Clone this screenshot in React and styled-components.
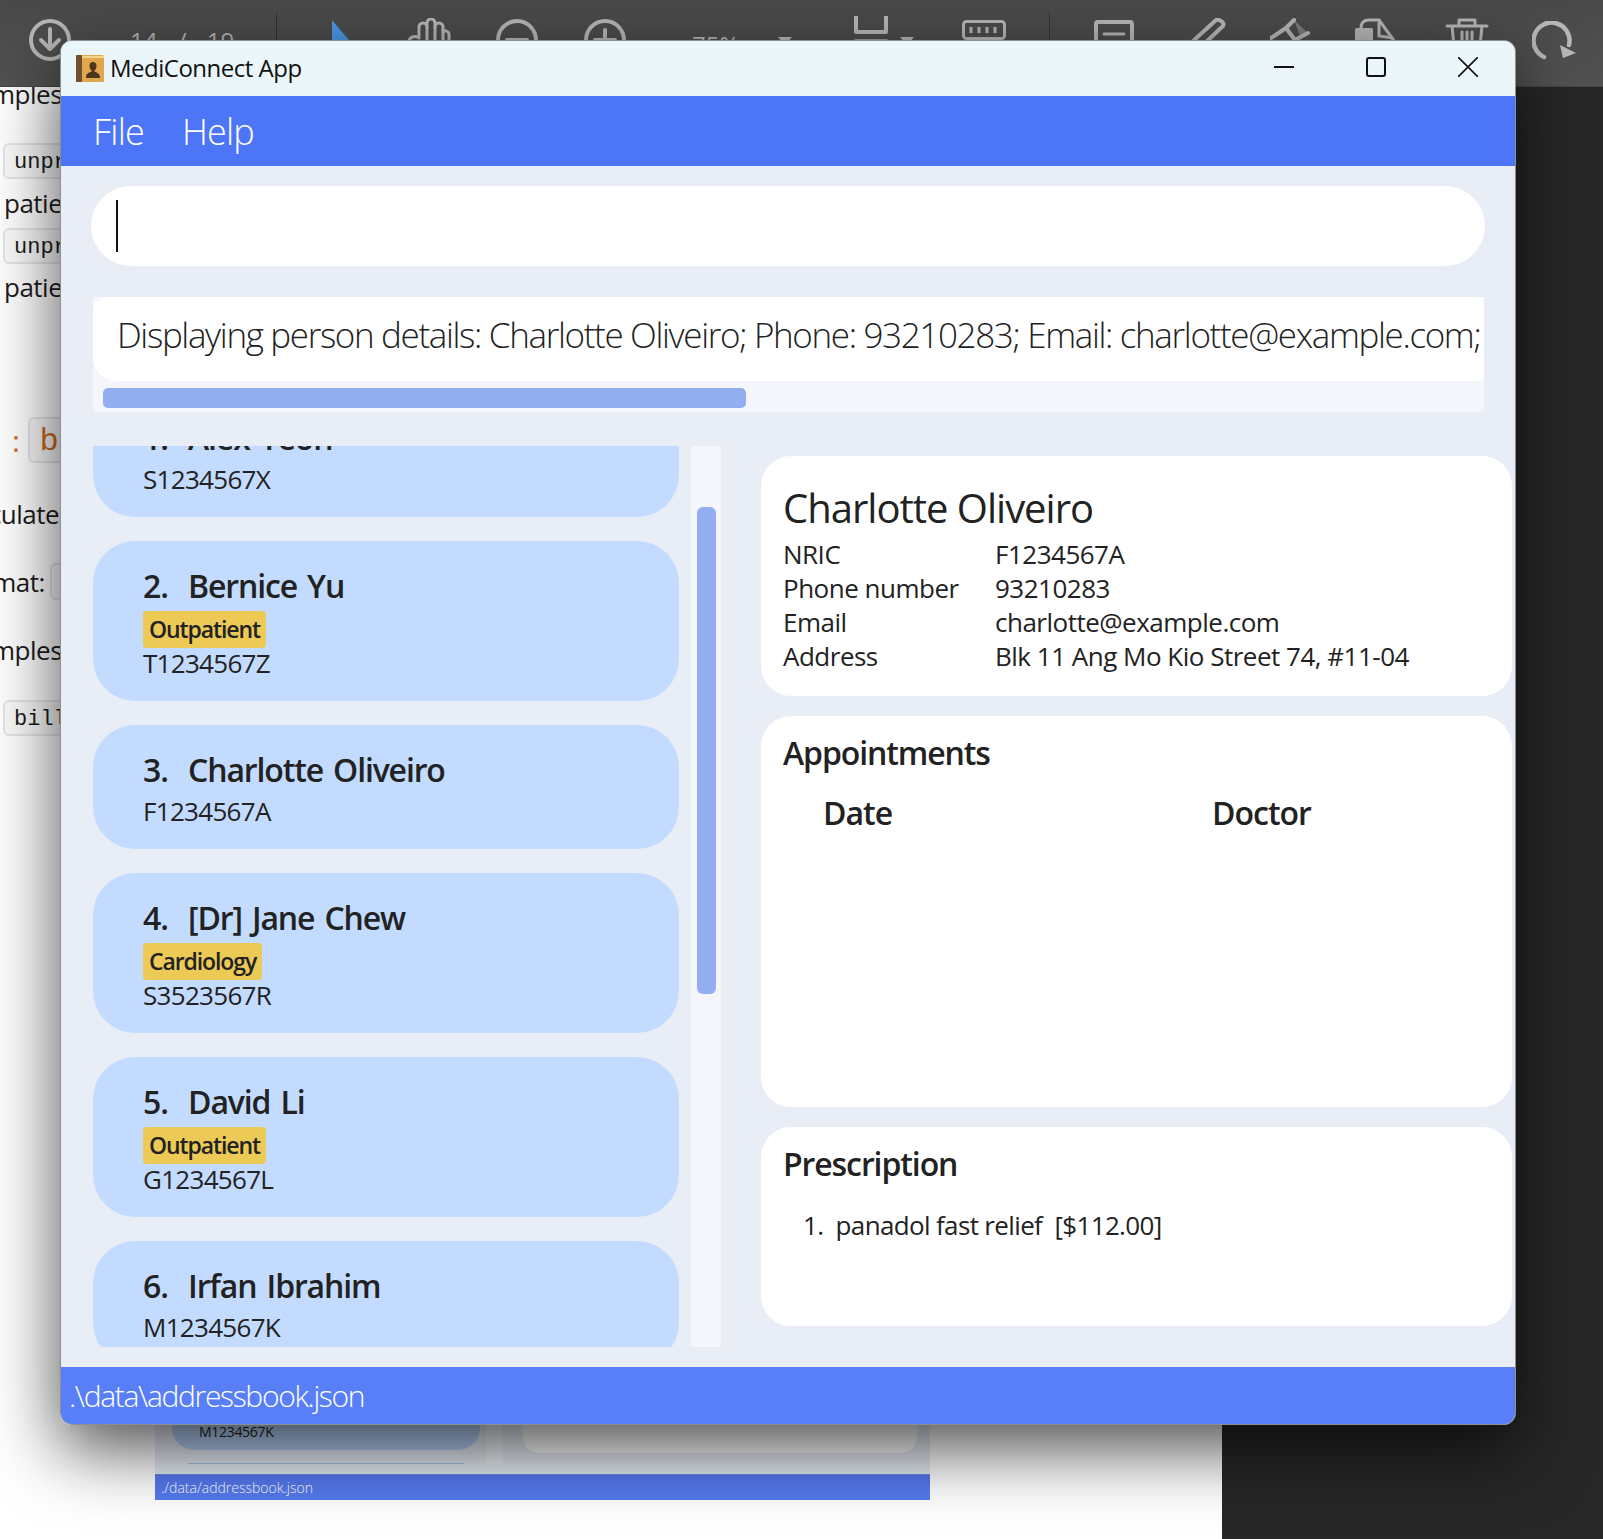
import React from 'react'
import styled, { createGlobalStyle } from 'styled-components'

const sans = '"Open Sans", "Noto Sans", sans-serif'

const GlobalStyle = createGlobalStyle`
  html, body {
    margin: 0;
    padding: 0;
    background: #fff;
    font-family: ${sans};
  }
`

const Desktop = styled.div`
  position: relative;
  width: 1603px;
  height: 1539px;
  overflow: hidden;
  display: flex;
  flex-direction: column;
  background: #272727;
`

const Toolbar = styled.div`
  height: 87px;
  flex: none;
  display: flex;
  align-items: flex-start;
  background: linear-gradient(#494949, #525252);
  border-bottom: 1px solid #444;
  box-sizing: border-box;
`

const ToolSlot = styled.div`
  flex: none;
  width: ${({ $w }) => ($w ? `${$w}px` : 'auto')};
  margin-left: ${({ $gap }) => $gap}px;
  margin-top: ${({ $top }) => $top}px;
  color: #b8b8b8;
  font: 400 24px ${sans};
  line-height: 30px;
  word-spacing: ${({ $words }) => $words || 0}px;
  white-space: nowrap;
  display: flex;
`

const ToolDivider = styled.div`
  flex: none;
  width: 1px;
  height: 60px;
  margin-top: 12px;
  margin-left: ${({ $gap }) => $gap}px;
  background: #333;
`

const Stage = styled.div`
  flex: 1;
  display: flex;
  min-height: 0;
`

const DocPage = styled.div`
  width: 1222px;
  flex: none;
  background: #fff;
  overflow: hidden;
  display: flex;
  flex-direction: column;
`

const DocLine = styled.div`
  flex: none;
  height: ${({ $h }) => $h || 36}px;
  margin-top: ${({ $mt }) => $mt}px;
  margin-left: ${({ $ml }) => $ml || 0}px;
  display: flex;
  align-items: center;
  gap: 8px;
  font: 400 26px ${sans};
  letter-spacing: -0.5px;
  color: #1c1c1c;
  white-space: nowrap;
`

const Chip = styled.span`
  display: inline-flex;
  align-items: center;
  height: 100%;
  box-sizing: border-box;
  padding: 3px 9px 0;
  margin-left: ${({ $ml }) => $ml || 0}px;
  border: 2px solid #e6e6e6;
  border-radius: 6px;
  background: #fafafa;
  font: 400 ${({ $size }) => $size || 22}px "Liberation Mono", monospace;
  letter-spacing: 0;
  color: ${({ $color }) => $color || '#1c1c1c'};
`

const Orange = styled.span`
  color: #d2691e;
  font-size: 30px;
`

const MiniShot = styled.div`
  flex: none;
  width: 775px;
  height: 120px;
  margin-left: 155px;
  margin-top: 644px;
  display: flex;
  flex-direction: column;
  background: #e8edf6;
`

const MiniBody = styled.div`
  flex: 1;
  display: flex;
  padding-left: 17px;
  align-items: flex-start;
`

const MiniList = styled.div`
  width: 308px;
  flex: none;
  display: flex;
  flex-direction: column;
`

const MiniCard = styled.div`
  height: 70px;
  background: #b9d3fa;
  border-radius: 0 0 22px 22px;
  padding: 43px 0 0 27px;
  box-sizing: border-box;
  font: 400 14px ${sans};
  letter-spacing: -0.3px;
  line-height: 18px;
  color: #222;
`

const MiniRule = styled.div`
  height: 1px;
  margin: 13px 16px 0;
  background: #a5c4ef;
`

const MiniTrack = styled.div`
  width: 16px;
  height: 84px;
  margin-left: 6px;
  flex: none;
  background: #f2f4f9;
`

const MiniPanel = styled.div`
  width: 394px;
  height: 73px;
  margin-left: 21px;
  flex: none;
  background: #fff;
  border-radius: 0 0 16px 16px;
`

const MiniStatus = styled.div`
  height: 26px;
  flex: none;
  box-sizing: border-box;
  border-top: 1px solid #6f8ae0;
  background: #567af0;
  padding-left: 6px;
  color: #fff;
  font: 300 14px ${sans};
  line-height: 25px;
`

const DarkSide = styled.div`
  flex: 1;
  background: #272727;
`

const WindowShadow = styled.div`
  position: absolute;
  left: 60px;
  top: 40px;
  width: 1456px;
  height: 1385px;
  border-radius: 12px;
  box-shadow: 0 24px 70px rgba(0, 0, 0, 0.7);
`

const AppWindow = styled.div`
  position: absolute;
  left: 60px;
  top: 40px;
  width: 1456px;
  height: 1385px;
  box-sizing: border-box;
  border: 1px solid #8c8f92;
  border-radius: 12px;
  overflow: hidden;
  display: flex;
  flex-direction: column;
  background: #e8edf6;
`

const TitleBar = styled.div`
  height: 55px;
  flex: none;
  display: flex;
  align-items: center;
  background: #eaf6f9;
  padding-left: 15px;
  color: #111;
`

const TitleText = styled.div`
  margin: 0 0 2px 6px;
  font: 400 24px ${sans};
  letter-spacing: -0.5px;
`

const WindowControls = styled.div`
  margin: 0 0 4px auto;
  display: flex;
  align-items: center;
  padding-right: 37px;
  gap: 72px;
`

const MenuBar = styled.div`
  height: 70px;
  flex: none;
  display: flex;
  align-items: center;
  gap: 38px;
  padding-left: 32px;
  background: #4d75f7;
  color: #fff;
  font: 300 36px ${sans};
  letter-spacing: -0.8px;
`

const CommandBox = styled.div`
  height: 80px;
  flex: none;
  margin: 20px 30px 0 30px;
  background: #fff;
  border-radius: 40px;
  display: flex;
  align-items: center;
  padding-left: 25px;
`

const Caret = styled.div`
  width: 2px;
  height: 52px;
  background: #111;
`

const ResultPane = styled.div`
  flex: none;
  margin: 31px 31px 0 32px;
  background: #f4f6fb;
`

const ResultBox = styled.div`
  height: 84px;
  box-sizing: border-box;
  background: #fff;
  border-radius: 14px 0 0 24px;
  overflow: hidden;
  padding-left: 24px;
  white-space: nowrap;
  font: 300 35px ${sans};
  letter-spacing: -1.35px;
  line-height: 76px;
  color: #222;
`

const ResultTrack = styled.div`
  height: 31px;
  box-sizing: border-box;
  padding: 7px 0 4px 10px;
`

const ScrollThumb = styled.div`
  background: #93aef0;
  border-radius: 5px;
  height: 100%;
  width: 643px;
`

const MainRow = styled.div`
  flex: 1;
  min-height: 0;
  display: flex;
  margin-top: 34px;
  padding: 0 3px 20px 32px;
  gap: 40px;
`

const ListPane = styled.div`
  width: 628px;
  flex: none;
  display: flex;
  overflow: hidden;
  gap: 12px;
`

const CardList = styled.div`
  width: 586px;
  flex: none;
  margin-top: -53px;
  display: flex;
  flex-direction: column;
  gap: 24px;
`

const Card = styled.div`
  flex: none;
  background: #c2dbfe;
  border-radius: 42px;
  padding: 24px 0 22px 50px;
  color: #222;
`

const CardName = styled.div`
  font: 600 32px ${sans};
  letter-spacing: -1.15px;
  word-spacing: 3px;
  line-height: 41px;
  margin-bottom: 5px;
  white-space: pre;
`

const Tag = styled.div`
  display: table;
  height: 37px;
  margin-bottom: -1px;
  padding: 0 6px;
  border-radius: 4px;
  background: #ecca55;
  font: 600 23px ${sans};
  letter-spacing: -1.1px;
  line-height: 36px;
  color: #222;
`

const CardId = styled.div`
  font: 400 26px ${sans};
  letter-spacing: -0.7px;
  line-height: 32px;
`

const ListTrack = styled.div`
  width: 30px;
  flex: none;
  background: #f4f6fb;
  padding: 61px 5px 0 6px;
  box-sizing: border-box;
`

const ListThumb = styled.div`
  height: 487px;
  border-radius: 6px;
  background: #93aef0;
`

const DetailColumn = styled.div`
  flex: 1;
  min-width: 0;
  padding-top: 10px;
  display: flex;
  flex-direction: column;
  gap: 20px;
`

const Panel = styled.div`
  height: ${({ $h }) => $h}px;
  flex: none;
  box-sizing: border-box;
  background: #fff;
  border-radius: 30px;
  padding: ${({ $pt }) => $pt}px 22px 0;
  color: #222;
`

const PersonName = styled.div`
  font: 400 40px ${sans};
  letter-spacing: -1px;
  line-height: 50px;
  margin-bottom: 4px;
`

const InfoGrid = styled.div`
  display: grid;
  grid-template-columns: 212px 1fr;
  grid-auto-rows: 34px;
  font: 400 26px ${sans};
  letter-spacing: -0.5px;
  line-height: 34px;
`

const PanelTitle = styled.div`
  font: 600 32px ${sans};
  letter-spacing: -1.1px;
  line-height: 40px;
`

const TableHead = styled.div`
  display: grid;
  grid-template-columns: 389px 1fr;
  padding-left: 40px;
  margin-top: 20px;
  font: 600 32px ${sans};
  letter-spacing: -1px;
  line-height: 40px;
`

const RxItem = styled.div`
  margin-top: 24px;
  padding-left: 20px;
  font: 400 26px ${sans};
  letter-spacing: -0.65px;
  line-height: 34px;
  white-space: pre;
`

const StatusBar = styled.div`
  height: 57px;
  flex: none;
  background: #587ff7;
  padding-left: 8px;
  color: #fff;
  font: 300 30px ${sans};
  letter-spacing: -1.33px;
  line-height: 57px;
`

const stroke = { fill: 'none', stroke: 'currentColor', strokeWidth: 4, strokeLinecap: 'round', strokeLinejoin: 'round' }

const icons = {
  download: (
    <svg width="42" height="42" viewBox="0 0 42 42" {...stroke}>
      <circle cx="21" cy="21" r="19" />
      <path d="M21 10v20M12 21l9 9 9-9" />
    </svg>
  ),
  cursor: (
    <svg width="24" height="40" viewBox="0 0 24 40">
      <path d="M1 0l22 26H12l-11 12z" fill="#4a9bea" />
    </svg>
  ),
  hand: (
    <svg width="44" height="44" viewBox="0 0 44 44" {...stroke} strokeWidth="3">
      <path d="M2 24c0-5 6-7 10-4V9a4 4 0 0 1 8 0V5a4 4 0 0 1 8 0v4a4 4 0 0 1 8 0v5a3.500 3.500 0 0 1 6 2v24" />
      <path d="M20 9v16M28 9v16M36 12v13" />
    </svg>
  ),
  minus: (
    <svg width="42" height="42" viewBox="0 0 42 42" {...stroke}>
      <circle cx="21" cy="21" r="19" />
      <path d="M11 21h20" />
    </svg>
  ),
  plus: (
    <svg width="42" height="42" viewBox="0 0 42 42" {...stroke}>
      <circle cx="21" cy="21" r="19" />
      <path d="M11 21h20M21 11v20" />
    </svg>
  ),
  caret: (
    <svg width="14" height="8" viewBox="0 0 14 8">
      <path d="M0 0h14L7 8z" fill="currentColor" />
    </svg>
  ),
  fit: (
    <svg width="34" height="30" viewBox="0 0 34 30" {...stroke}>
      <path d="M2 0v16h30V0" />
      <path d="M2 26h30" strokeWidth="6" opacity="0.7" />
    </svg>
  ),
  keyboard: (
    <svg width="44" height="20" viewBox="0 0 44 20">
      <rect x="1.5" y="1.5" width="41" height="17" rx="3" fill="none" stroke="currentColor" strokeWidth="3" />
      <path d="M9 7v6M17 7v6M25 7v6M33 7v6" stroke="currentColor" strokeWidth="3" />
    </svg>
  ),
  comment: (
    <svg width="40" height="34" viewBox="0 0 40 34" {...stroke}>
      <rect x="2" y="2" width="36" height="30" rx="2" />
      <path d="M10 14h20M10 22h14" strokeWidth="3" />
    </svg>
  ),
  pen: (
    <svg width="36" height="36" viewBox="0 0 36 36" {...stroke}>
      <path d="M2 24L25 3c3-3 10 1 8 5L14 26" />
    </svg>
  ),
  fill: (
    <svg width="40" height="34" viewBox="0 0 40 34">
      <path d="M24 2l14 13-8 3z" fill="#7c7c7c" />
      <path d="M1 20l15-10 8-8M16 10l9 12M25 22l13-7" {...stroke} />
    </svg>
  ),
  stamp: (
    <svg width="46" height="32" viewBox="0 0 46 32">
      <rect y="10" width="18" height="18" rx="2" fill="currentColor" />
      <path d="M6 10c0-6 3-8 8-8h10l16 22" fill="none" stroke="currentColor" strokeWidth="3" />
      <path d="M24 4v14l14 2" fill="none" stroke="currentColor" strokeWidth="3" />
    </svg>
  ),
  trash: (
    <svg width="44" height="40" viewBox="0 0 44 40" {...stroke} strokeWidth="3">
      <path d="M2 8h40M14 8V2h16v6M7 8l3 30h24l3-30M17 14v14M22 14v14M27 14v14" />
    </svg>
  ),
  redo: (
    <svg width="44" height="40" viewBox="0 0 44 40" {...stroke}>
      <path d="M12 36A18 18 0 1 1 37 24" strokeWidth="4.500" />
      <path d="M28 24l16 8-13 5z" fill="currentColor" stroke="none" />
    </svg>
  ),
}

const PersonCard = ({ index, name, tag, id }) => (
  <Card>
    <CardName>{`${index}.  ${name}`}</CardName>
    {tag && <Tag>{tag}</Tag>}
    <CardId>{id}</CardId>
  </Card>
)

const people = [
  { index: 1, name: 'Alex Yeoh', id: 'S1234567X' },
  { index: 2, name: 'Bernice Yu', tag: 'Outpatient', id: 'T1234567Z' },
  { index: 3, name: 'Charlotte Oliveiro', id: 'F1234567A' },
  { index: 4, name: '[Dr] Jane Chew', tag: 'Cardiology', id: 'S3523567R' },
  { index: 5, name: 'David Li', tag: 'Outpatient', id: 'G1234567L' },
  { index: 6, name: 'Irfan Ibrahim', id: 'M1234567K' },
]

const App = () => (
  <Desktop>
    <GlobalStyle />
    <Toolbar>
      <ToolSlot $gap={29} $top={19}>{icons.download}</ToolSlot>
      <ToolSlot $gap={59} $top={26} $w={146} $words={14}>14 / 19</ToolSlot>
      <ToolDivider $gap={0} />
      <ToolSlot $gap={54} $top={20}>{icons.cursor}</ToolSlot>
      <ToolSlot $gap={52} $top={18}>{icons.hand}</ToolSlot>
      <ToolSlot $gap={45} $top={19}>{icons.minus}</ToolSlot>
      <ToolSlot $gap={46} $top={19}>{icons.plus}</ToolSlot>
      <ToolSlot $gap={66} $top={30} $w={42}>75%</ToolSlot>
      <ToolSlot $gap={44} $top={37}>{icons.caret}</ToolSlot>
      <ToolSlot $gap={62} $top={16}>{icons.fit}</ToolSlot>
      <ToolSlot $gap={12} $top={37}>{icons.caret}</ToolSlot>
      <ToolSlot $gap={48} $top={20}>{icons.keyboard}</ToolSlot>
      <ToolDivider $gap={43} />
      <ToolSlot $gap={44} $top={20}>{icons.comment}</ToolSlot>
      <ToolSlot $gap={56} $top={18}>{icons.pen}</ToolSlot>
      <ToolSlot $gap={44} $top={18}>{icons.fill}</ToolSlot>
      <ToolSlot $gap={45} $top={18}>{icons.stamp}</ToolSlot>
      <ToolSlot $gap={44} $top={18}>{icons.trash}</ToolSlot>
      <ToolSlot $gap={43} $top={21}>{icons.redo}</ToolSlot>
    </Toolbar>
    <Stage>
      <DocPage>
        <DocLine $mt={-11} $ml={-50}>Examples:</DocLine>
        <DocLine $mt={31} $ml={3}><Chip>unprescribe</Chip></DocLine>
        <DocLine $mt={6} $ml={4}>patient 1</DocLine>
        <DocLine $mt={7} $ml={3}><Chip>unprescribe</Chip></DocLine>
        <DocLine $mt={5} $ml={4}>patient 2</DocLine>
        <DocLine $mt={112} $h={46} $ml={12}><Orange>:</Orange><Chip $size={32} $color="#d2691e" $ml={1}>bill</Chip></DocLine>
        <DocLine $mt={33} $ml={-47}>Calculates</DocLine>
        <DocLine $mt={31} $ml={-46} $h={37}>Format:<Chip $ml={-3}>bill</Chip></DocLine>
        <DocLine $mt={32} $ml={-50}>Examples:</DocLine>
        <DocLine $mt={32} $ml={3}><Chip>bill 1</Chip></DocLine>
        <MiniShot>
          <MiniBody>
            <MiniList>
              <MiniCard>M1234567K</MiniCard>
              <MiniRule />
            </MiniList>
            <MiniTrack />
            <MiniPanel />
          </MiniBody>
          <MiniStatus>./data/addressbook.json</MiniStatus>
        </MiniShot>
      </DocPage>
      <DarkSide />
    </Stage>
    <WindowShadow />
    <AppWindow>
      <TitleBar>
        <svg width="28" height="27" viewBox="0 0 28 27">
          <rect width="28" height="27" rx="1.5" fill="#e2a64c" />
          <rect width="6" height="27" rx="1" fill="#6f4f32" />
          <rect x="6" y="1" width="22" height="2" fill="#f6d48a" />
          <path d="M10 23c0-5 3-5 6-7-2-2-2.500-3-2.500-5 0-3 1.500-4 3.500-4s3.500 1 3.500 4c0 2-.5 3-2.500 5 3 2 6 2 6 7z" fill="#4d3520" />
        </svg>
        <TitleText>MediConnect App</TitleText>
        <WindowControls>
          <svg width="20" height="20" viewBox="0 0 20 20">
            <path d="M0 10h20" stroke="#111" strokeWidth="2" />
          </svg>
          <svg width="20" height="20" viewBox="0 0 20 20">
            <rect x="1" y="1" width="18" height="18" rx="2" fill="none" stroke="#111" strokeWidth="2" />
          </svg>
          <svg width="20" height="20" viewBox="0 0 20 20">
            <path d="M0 0l20 20M20 0L0 20" stroke="#111" strokeWidth="1.600" />
          </svg>
        </WindowControls>
      </TitleBar>
      <MenuBar>
        <span>File</span>
        <span>Help</span>
      </MenuBar>
      <CommandBox>
        <Caret />
      </CommandBox>
      <ResultPane>
        <ResultBox>
          Displaying person details: Charlotte Oliveiro; Phone: 93210283; Email: charlotte@example.com; Address: Blk 11 Ang Mo Kio Street 74, #11-04
        </ResultBox>
        <ResultTrack>
          <ScrollThumb />
        </ResultTrack>
      </ResultPane>
      <MainRow>
        <ListPane>
          <CardList>
            {people.map(person => (
              <PersonCard key={person.index} {...person} />
            ))}
          </CardList>
          <ListTrack>
            <ListThumb />
          </ListTrack>
        </ListPane>
        <DetailColumn>
          <Panel $h={240} $pt={27}>
            <PersonName>Charlotte Oliveiro</PersonName>
            <InfoGrid>
              <div>NRIC</div>
              <div>F1234567A</div>
              <div>Phone number</div>
              <div>93210283</div>
              <div>Email</div>
              <div>charlotte@example.com</div>
              <div>Address</div>
              <div>Blk 11 Ang Mo Kio Street 74, #11-04</div>
            </InfoGrid>
          </Panel>
          <Panel $h={391} $pt={17}>
            <PanelTitle>Appointments</PanelTitle>
            <TableHead>
              <div>Date</div>
              <div>Doctor</div>
            </TableHead>
          </Panel>
          <Panel $h={199} $pt={17}>
            <PanelTitle>Prescription</PanelTitle>
            <RxItem>{'1.  panadol fast relief  [$112.00]'}</RxItem>
          </Panel>
        </DetailColumn>
      </MainRow>
      <StatusBar>.\data\addressbook.json</StatusBar>
    </AppWindow>
  </Desktop>
)

export default App
